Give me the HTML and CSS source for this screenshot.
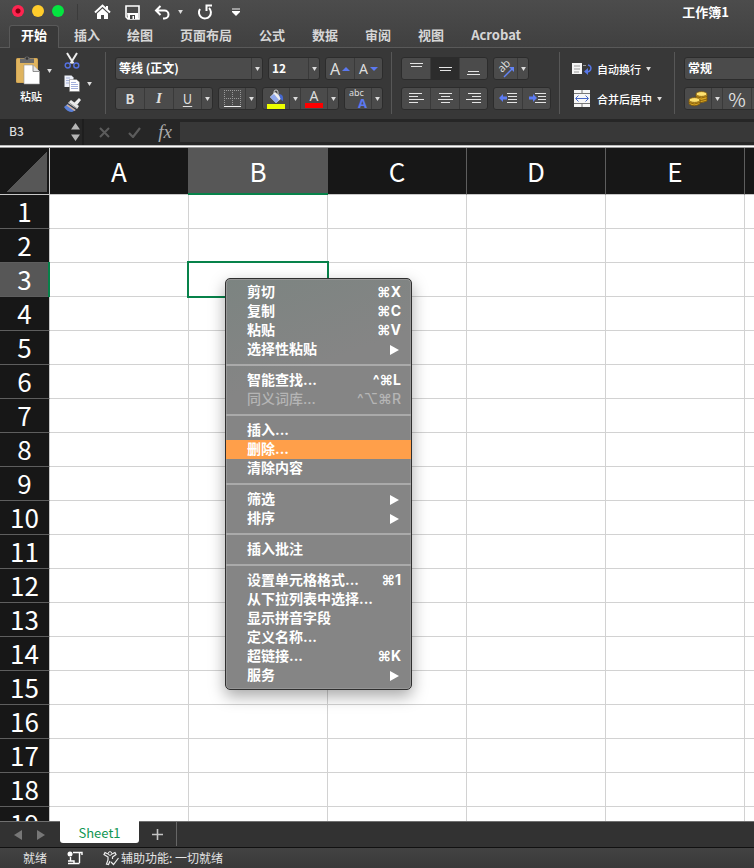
FILE: index.html
```html
<!DOCTYPE html>
<html lang="zh-CN">
<head>
    <meta charset="UTF-8">
    <meta name="viewport" content="width=device-width, initial-scale=1.0">
    <title>工作簿1</title>
    <link rel="stylesheet" href="styles.css">
</head>
<body>
    <svg width="0" height="0" class="defs">
        <symbol id="down" viewBox="0 0 6 5"><path d="M0 0h6L3 5z" fill="#dedede"/></symbol>
    </svg>

    <!-- Title bar -->
    <header class="titlebar">
        <div class="lights">
            <button class="light close" aria-label="关闭"></button>
            <button class="light minimize" aria-label="最小化"></button>
            <button class="light zoom" aria-label="缩放"></button>
        </div>
        <div class="quick">
            <button aria-label="主页"><svg width="17" height="16" viewBox="0 0 17 16"><path d="M1 8.500L8.500 1.500L16 8.500M13 2v3" fill="none" stroke="#fff" stroke-width="2"/><path d="M3 9.500l5.500-5 5.500 5V15h-4v-4H7v4H3z" fill="#fff"/></svg></button>
            <button aria-label="保存"><svg width="15" height="15" viewBox="0 0 15 15"><path d="M1 1h13v13H3l-2-2z" fill="none" stroke="#fff" stroke-width="1.600"/><path d="M2 8h11v6H3z" fill="#fff"/><path d="M5 10h5v4H5z" fill="#444"/><path d="M7.500 11h1.500v3H7.500z" fill="#fff"/></svg></button>
            <button aria-label="撤销"><svg width="17" height="15" viewBox="0 0 17 15"><path d="M6.500 1L2 5.500 6.500 10M2 5.500h8.500a4 4 0 0 1 0 8H9" fill="none" stroke="#fff" stroke-width="2"/></svg></button>
            <button class="more" aria-label="撤销选项"><svg width="5" height="4"><use href="#down"/></svg></button>
            <button aria-label="恢复"><svg width="17" height="16" viewBox="0 0 17 16"><path d="M3 5a6 6 0 1 0 9-1" fill="none" stroke="#fff" stroke-width="2"/><path d="M9.500 7V1.500H15" fill="none" stroke="#fff" stroke-width="2"/></svg></button>
            <button class="custom" aria-label="自定义"><svg width="8" height="8" viewBox="0 0 8 8"><path d="M0 1h8" stroke="#bbb" stroke-width="1.500"/><path d="M0 3h8v1L4 8 0 4z" fill="#fff"/></svg></button>
        </div>
        <h1>工作簿1</h1>
    </header>

    <nav class="tabs">
        <button class="active">开始</button>
        <button>插入</button>
        <button>绘图</button>
        <button>页面布局</button>
        <button>公式</button>
        <button>数据</button>
        <button>审阅</button>
        <button>视图</button>
        <button>Acrobat</button>
    </nav>

    <!-- Ribbon -->
    <section class="ribbon">
        <div class="group clipboard">
            <button class="paste">
                <svg width="25" height="31" viewBox="0 0 25 31"><rect y="3" width="22" height="25" rx="1.500" fill="#d3a653"/><rect x="1" y="4" width="20" height="23" fill="#dfb45f"/><path d="M4 3.500h4a3.200 3.200 0 0 1 6 0h4V8H4z" fill="#6c6c6c"/><circle cx="11" cy="3.500" r="1.300" fill="#333"/><path d="M8 10h9l6.500 6.500V29H8z" fill="#fff" stroke="#999" stroke-width=".6"/><path d="M17 10v6.500h6.500" fill="#e4e4e4" stroke="#777" stroke-width=".8"/></svg>
                <span>粘贴</span>
            </button>
            <button class="drop" aria-label="粘贴选项"><svg width="5" height="4"><use href="#down"/></svg></button>
            <div class="clips">
                <button aria-label="剪切"><svg width="16" height="17" viewBox="0 0 16 17"><path d="M3 1l6.500 10.500M13 1L6.500 11.500" stroke="#eee" stroke-width="2"/><circle cx="3.700" cy="13.500" r="2.500" fill="none" stroke="#5470e0" stroke-width="1.400"/><circle cx="12.300" cy="13.500" r="2.500" fill="none" stroke="#5470e0" stroke-width="1.400"/></svg></button>
                <div class="row">
                    <button aria-label="复制"><svg width="16" height="17" viewBox="0 0 16 17"><path d="M.5.5h7l2 2V12h-9z" fill="#eef1fa"/><path d="M2 3h4M2 5.500h5M2 8h3" stroke="#a3b0dc"/><path d="M5.500 4.500h7L15.500 7v9.500h-10z" fill="#fff" stroke="#777" stroke-width=".5"/><path d="M7 7.500h5M7 9.500h7M7 11.500h7M7 13.500h7" stroke="#a3b0dc"/></svg></button>
                    <button class="copy-more" aria-label="复制选项"><svg width="5" height="4"><use href="#down"/></svg></button>
                </div>
                <button aria-label="格式刷"><svg width="17" height="15" viewBox="0 0 17 15"><path d="M15 0l2 2-4 5-3-2z" fill="#eee"/><path d="M7 2l8 6-2 3-9-6z" fill="#e9e9e9"/><path d="M5 4.500l8 6" stroke="#999"/><path d="M3.500 6L12 12l-4 2Q3 14 0 9z" fill="#5b80d8"/><path d="M3 7L11 12.500" stroke="#e0b58c" stroke-width="1.500"/></svg></button>
            </div>
        </div>

        <div class="group">
            <div class="row">
                <div class="box combo font-name"><select aria-label="字体"><option>等线 (正文)</option></select><span class="arrow"><svg width="5" height="4"><use href="#down"/></svg></span></div>
                <div class="box combo font-size"><select aria-label="字号"><option>12</option></select><span class="arrow"><svg width="5" height="4"><use href="#down"/></svg></span></div>
                <div class="box">
                    <button class="grow" aria-label="增大字号">A<svg width="8" height="4" viewBox="0 0 8 4"><path d="M0 4l4-4 4 4z" fill="#5b78f0"/></svg></button>
                    <button class="shrink" aria-label="减小字号">A<svg width="8" height="4" viewBox="0 0 8 4"><path d="M0 0h8L4 4z" fill="#5b78f0"/></svg></button>
                </div>
            </div>
            <div class="row">
                <div class="box">
                    <button class="bold">B</button>
                    <button class="italic">I</button>
                    <button class="underline">U</button>
                    <button class="arrow" aria-label="下划线选项"><svg width="5" height="4"><use href="#down"/></svg></button>
                </div>
                <div class="box">
                    <button class="mid" aria-label="边框"><svg width="17" height="17" viewBox="0 0 17 17"><path d="M.5 0v16M8.500 0v16M16.500 0v16M0 .5h17M0 8.500h17" stroke="#999" stroke-dasharray="1 1"/><path d="M0 16.500h17" stroke="#eee"/></svg></button>
                    <button class="arrow" aria-label="边框选项"><svg width="5" height="4"><use href="#down"/></svg></button>
                </div>
                <div class="box">
                    <button class="mid" aria-label="填充颜色"><svg width="20" height="20" viewBox="0 0 20 20"><path d="M8 5V3a2 2 0 0 1 4 0v3" fill="none" stroke="#ccc"/><path d="M9 3l7 6-6 5-6-6z" fill="#eee"/><path d="M8 5l5 6-3 3-6-6z" fill="#91a9ed"/><path d="M13 5q5 0 4 7-3-1-4-7z" fill="#4668cf"/><rect y="15" x="1" width="18" height="5" fill="#edff00"/></svg></button>
                    <button class="arrow" aria-label="填充选项"><svg width="5" height="4"><use href="#down"/></svg></button>
                    <button class="font-color" aria-label="字体颜色">A</button>
                    <button class="arrow" aria-label="字体颜色选项"><svg width="5" height="4"><use href="#down"/></svg></button>
                </div>
                <div class="box">
                    <button class="mid phonetic"><span>abc</span><b>A</b></button>
                    <button class="arrow" aria-label="拼音选项"><svg width="5" height="4"><use href="#down"/></svg></button>
                </div>
            </div>
        </div>

        <div class="group">
            <div class="row">
                <div class="box">
                    <button aria-label="顶端对齐"><svg width="13" height="17" viewBox="0 0 13 17"><path d="M0 3.500h13M1 6.500h11" stroke="#e4e4e4"/></svg></button>
                    <button class="pressed" aria-label="垂直居中"><svg width="13" height="17" viewBox="0 0 13 17"><path d="M0 7.500h13M1 10.500h11" stroke="#e4e4e4"/></svg></button>
                    <button aria-label="底端对齐"><svg width="13" height="17" viewBox="0 0 13 17"><path d="M1 11.500h11M0 14.500h13" stroke="#e4e4e4"/></svg></button>
                </div>
                <div class="box">
                    <button class="angle" aria-label="方向"><svg width="20" height="18" viewBox="0 0 20 18"><text transform="translate(6 13) rotate(-45)" class="angle-text">ab</text><path d="M8 17l8-8" stroke="#6383f5" stroke-width="1.500"/><path d="M13 7h5v5z" fill="#6383f5"/></svg></button>
                    <button class="arrow" aria-label="方向选项"><svg width="5" height="4"><use href="#down"/></svg></button>
                </div>
            </div>
            <div class="row">
                <div class="box">
                    <button aria-label="左对齐"><svg width="15" height="11" viewBox="0 0 15 11"><path d="M0 .5h13M0 3.500h9M0 6.500h15M0 9.500h9" stroke="#e4e4e4"/></svg></button>
                    <button aria-label="居中"><svg width="15" height="11" viewBox="0 0 15 11"><path d="M1 .5h13M3 3.500h9M0 6.500h15M3 9.500h9" stroke="#e4e4e4"/></svg></button>
                    <button aria-label="右对齐"><svg width="15" height="11" viewBox="0 0 15 11"><path d="M2 .5h13M6 3.500h9M0 6.500h15M6 9.500h9" stroke="#e4e4e4"/></svg></button>
                </div>
                <div class="box">
                    <button aria-label="减少缩进"><svg width="18" height="11" viewBox="0 0 18 11"><path d="M8 .5h10M9 3.500h9M9 6.500h9M8 9.500h10" stroke="#e4e4e4"/><path d="M0 5l4-4v2.500h4v3H4V9z" fill="#5d7cf3"/></svg></button>
                    <button aria-label="增加缩进"><svg width="18" height="11" viewBox="0 0 18 11"><path d="M7 .5h11M10 3.500h8M10 6.500h8M7 9.500h11" stroke="#e4e4e4"/><path d="M9 5L5 1v2.500H1v3h4V9z" fill="#5d7cf3"/></svg></button>
                </div>
            </div>
        </div>

        <div class="group wrap">
            <button class="command">
                <svg width="20" height="13" viewBox="0 0 20 13"><path d="M0 1h10v11H0z" fill="#f5f5f5"/><path d="M2 4h6M2 7h6M2 10h5M11 3.500h3" stroke="#999"/><path d="M16 3q4 1 2.500 5Q17 10 15 10" fill="none" stroke="#5777e8" stroke-width="1.500"/><path d="M12 9.500L16 6v7z" fill="#5777e8"/></svg>
                <span>自动换行</span>
                <svg width="5" height="4"><use href="#down"/></svg>
            </button>
            <button class="command">
                <svg width="20" height="17" viewBox="0 0 20 17"><path d="M2 0h16v17H2z" fill="#f7f7f7"/><path d="M2 3.500h16M2 13.500h16M10 0v3M10 14v3" stroke="#777"/><path d="M4 8.500h12M6.500 5.500l-3 3 3 3M13.500 5.500l3 3-3 3" fill="none" stroke="#4868c8"/></svg>
                <span>合并后居中</span>
                <svg width="5" height="4"><use href="#down"/></svg>
            </button>
        </div>

        <div class="group number">
            <div class="row">
                <div class="box combo format"><select aria-label="数字格式"><option>常规</option></select><span class="arrow"><svg width="5" height="4"><use href="#down"/></svg></span></div>
            </div>
            <div class="row">
                <div class="box">
                    <button class="mid" aria-label="货币"><svg width="20" height="16" viewBox="0 0 20 16"><g fill="#d9a520" stroke="#79540a" stroke-width=".8"><path d="M8 3v7q5 3 11 0V3z"/><ellipse cx="13.500" cy="3" rx="5.500" ry="2.400" fill="#ffe270"/><path d="M8 5.500q5 3 11 0M8 8q5 3 11 0" fill="none"/><path d="M1 9v4q5 3.500 11 0V9z"/><ellipse cx="6.500" cy="9" rx="5.500" ry="2.400" fill="#ffe270"/><path d="M1 11.500q5 3 11 0" fill="none"/></g></svg></button>
                    <button class="arrow" aria-label="货币选项"><svg width="5" height="4"><use href="#down"/></svg></button>
                    <button class="percent">%</button>
                    <button aria-label="千位分隔"></button>
                </div>
            </div>
        </div>
    </section>

    <!-- Formula bar -->
    <section class="formula-bar">
        <div class="name-box">
            <input type="text" value="B3" aria-label="名称框">
            <svg width="9" height="18" viewBox="0 0 9 18"><path d="M0 6.500L4.500 0 9 6.500zM0 11.500h9L4.500 18z" fill="#b5b5b5"/></svg>
        </div>
        <button class="cancel" aria-label="取消"><svg width="11" height="11" viewBox="0 0 11 11"><path d="M1 1l9 9M10 1l-9 9" stroke="#5c5c5c" stroke-width="2"/></svg></button>
        <button class="enter" aria-label="输入"><svg width="13" height="11" viewBox="0 0 13 11"><path d="M1 6l4 4 7-9" fill="none" stroke="#5c5c5c" stroke-width="2.200"/></svg></button>
        <button class="fx">fx</button>
        <input class="formula" type="text" aria-label="编辑栏">
    </section>

    <main class="sheet">
        <table>
            <thead>
                <tr id="columns"><th class="corner"></th></tr>
            </thead>
            <tbody id="rows"></tbody>
        </table>
    </main>

    <footer>
        <div class="sheet-bar">
            <button class="step" aria-label="上一个"><svg width="8" height="10" viewBox="0 0 8 10"><path d="M8 0v10L0 5z" fill="#777"/></svg></button>
            <button class="step" aria-label="下一个"><svg width="8" height="10" viewBox="0 0 8 10"><path d="M0 0v10l8-5z" fill="#777"/></svg></button>
            <button class="sheet-tab">Sheet1</button>
            <button class="add" aria-label="新建工作表"><svg width="11" height="11" viewBox="0 0 11 11"><path d="M5.500 0v11M0 5.500h11" stroke="#c4c4c4" stroke-width="1.600"/></svg></button>
        </div>
        <div class="status">
            <span>就绪</span>
            <svg width="16" height="14" viewBox="0 0 16 14"><circle cx="3" cy="3" r="2.500" fill="#fff"/><path d="M6 1.500h9v2.500M12.500 2v10M3.500 6v4M1 12.500h11.500M1 10h6v2" fill="none" stroke="#fff" stroke-width="1.400"/></svg>
            <span class="access"><svg width="16" height="15" viewBox="0 0 16 15"><circle cx="7" cy="2.500" r="1.800" fill="none" stroke="#eee"/><path d="M5 3L2 1.500 1 3.500 5 6v3l-1.500 4 2 .5L7 10M9 3l3-1.500 1 2L9.500 6v2M8 11l2.500 2.500L15.500 7" fill="none" stroke="#eee" stroke-width="1.200"/></svg>辅助功能: 一切就绪</span>
        </div>
    </footer>

    <!-- Context menu -->
    <div class="menu">
        <button>剪切<kbd>⌘X</kbd></button>
        <button>复制<kbd>⌘C</kbd></button>
        <button>粘贴<kbd>⌘V</kbd></button>
        <button class="sub">选择性粘贴</button>
        <hr>
        <button>智能查找...<kbd>^⌘L</kbd></button>
        <button disabled>同义词库...<kbd>^⌥⌘R</kbd></button>
        <hr>
        <button>插入...</button>
        <button class="hover">删除...</button>
        <button>清除内容</button>
        <hr>
        <button class="sub">筛选</button>
        <button class="sub">排序</button>
        <hr>
        <button>插入批注</button>
        <hr>
        <button>设置单元格格式...<kbd>⌘1</kbd></button>
        <button>从下拉列表中选择...</button>
        <button>显示拼音字段</button>
        <button>定义名称...</button>
        <button>超链接...<kbd>⌘K</kbd></button>
        <button class="sub">服务</button>
    </div>

    <script>
        const columns = ['A', 'B', 'C', 'D', 'E', ''];
        const selected = { column: 'B', row: 3 };

        columns.forEach(name => {
            const th = document.createElement('th');
            th.textContent = name;
            if (name === selected.column) th.className = 'current';
            document.getElementById('columns').appendChild(th);
        });

        for (let i = 1; i <= 19; i++) {
            const tr = document.createElement('tr');
            const th = document.createElement('th');
            th.textContent = i;
            if (i === selected.row) th.className = 'current';
            tr.appendChild(th);
            columns.forEach(name => {
                const td = document.createElement('td');
                if (i === selected.row && name === selected.column) td.className = 'selected';
                tr.appendChild(td);
            });
            document.getElementById('rows').appendChild(tr);
        }
    </script>
</body>
</html>
```

FILE: styles.css
```css
* {
    box-sizing: border-box;
}
body {
    margin: 0;
    height: 100vh;
    display: flex;
    flex-direction: column;
    overflow: hidden;
    position: relative;
    background: #383838;
    color: #fff;
    font-family: "Noto Sans CJK SC", sans-serif;
    font-size: 12px;
}
.defs {
    position: absolute;
}
button, input, select {
    margin: 0;
    padding: 0;
    border: 0;
    outline: none;
    background: none;
    color: inherit;
    font: inherit;
}
button {
    display: flex;
    align-items: center;
    justify-content: center;
}
svg {
    display: block;
    flex: none;
}

/* title bar */
.titlebar {
    flex: none;
    height: 24px;
    display: flex;
    align-items: center;
    padding: 0 25px 0 12px;
    background: linear-gradient(#4c4c4c, #464646);
}
.lights {
    display: flex;
    gap: 8px;
    height: 16px;
    padding-right: 13px;
    border-right: 1px solid #3b3b3b;
}
.light {
    width: 12px;
    height: 12px;
    margin-top: 1px;
    border-radius: 50%;
}
.close {
    background: radial-gradient(circle, #7e0010 2px, #ff2450 3px);
}
.minimize {
    background: #ffcc2b;
}
.zoom {
    background: #04e440;
}
.quick {
    display: flex;
    align-items: center;
    padding-left: 16px;
}
.quick button {
    margin-right: 14px;
}
.quick .more {
    margin: 0 14px 0 -7px;
}
.quick .custom {
    margin-left: 4px;
}
h1 {
    margin: 0 0 0 auto;
    font-size: 13px;
    line-height: 24px;
}

/* tabs */
.tabs {
    flex: none;
    height: 24px;
    display: flex;
    gap: 3px;
    padding: 1px 9px 0;
    background: linear-gradient(#464646, #404040);
    border-bottom: 1px solid #595959;
}
.tabs button {
    height: 23px;
    padding: 0 12px 4px;
    border-radius: 3px 3px 0 0;
    color: #d6d6d6;
    font-size: 13px;
    font-weight: bold;
    white-space: nowrap;
}
.tabs .active {
    padding: 0 11px 5px;
    border: 1px solid #595959;
    border-bottom: 0;
    background: #393939;
    color: #fff;
}

/* ribbon */
.ribbon {
    flex: none;
    height: 71px;
    display: flex;
    padding: 4px 0 5px;
    overflow: hidden;
    background: #383838;
}
.group {
    flex: none;
    display: flex;
    flex-direction: column;
    gap: 7px;
    padding: 5px 8px 0 9px;
    border-right: 1px solid #575757;
}
.row {
    display: flex;
    gap: 5px;
}
.box {
    display: flex;
    height: 23px;
    border: 1px solid #2c2c2c;
    border-radius: 3px;
    background: #4b4b4b;
}
.box button {
    width: 29px;
    color: #dedede;
}
.box button:first-child, .box button:last-child, .box .underline {
    width: 28px;
}
.box button + button {
    border-left: 1px solid #3a3a3a;
}
.box .mid:first-child {
    width: 26px;
}
.box .arrow, .box .arrow:last-child {
    width: 11px;
}
.combo select {
    flex: 1;
    min-width: 0;
    padding: 0 0 3px 3px;
    appearance: none;
    font-size: 12px;
    font-weight: bold;
}
.combo .arrow {
    width: 14px;
    display: flex;
    align-items: center;
    justify-content: center;
    border-left: 1px solid #3a3a3a;
}
.font-name {
    width: 148px;
}
.font-size {
    width: 52px;
}
.format {
    width: 120px;
}
.pressed {
    background: #2c2c2c;
}
.grow, .shrink {
    gap: 2px;
    font-family: "Noto Sans", sans-serif;
    font-size: 16px;
    line-height: 20px;
}
.shrink {
    font-size: 14px;
}
.bold {
    font-weight: bold;
    font-size: 13px;
}
.italic {
    font: italic bold 15px "Liberation Serif", serif;
}
.underline {
    font-size: 13px;
    text-decoration: underline;
    text-underline-offset: 2px;
}
.box .font-color {
    width: 27px;
    align-items: flex-start;
    font: 14px/16px "Noto Sans", sans-serif;
    background: linear-gradient(#f00, #f00) 4px 15px / 18px 5px no-repeat;
}
.phonetic {
    flex-direction: column;
    align-items: flex-start;
    font: 9px/9px "Noto Sans", sans-serif;
}
.phonetic span {
    padding-left: 4px;
}
.phonetic b {
    padding-left: 13px;
    color: #5b78f0;
    font-size: 13px;
    line-height: 12px;
}
.box .angle:first-child {
    width: 23px;
}
.angle svg {
    overflow: visible;
}
.angle-text {
    fill: #ddd;
    font: 11px "Noto Sans", sans-serif;
}
.box .percent {
    font-size: 19px;
    line-height: 20px;
}
.wrap {
    width: 115px;
}
.command {
    height: 23px;
    gap: 5px;
    padding-left: 3px;
    justify-content: flex-start;
    font-size: 11px;
    font-weight: 500;
    white-space: nowrap;
}
.clipboard {
    width: 106px;
    flex-direction: row;
    gap: 0;
    padding: 0 0 0 14px;
}
.paste {
    flex-direction: column;
    justify-content: flex-start;
    gap: 2px;
    padding-top: 3px;
    font-size: 11px;
    font-weight: 500;
    line-height: 16px;
}
.paste span {
    padding-left: 6px;
}
.clipboard .drop {
    width: 14px;
    height: 38px;
}
.clips {
    display: flex;
    flex-direction: column;
    align-items: flex-start;
    gap: 6px;
    padding-left: 8px;
}
.copy-more {
    padding-left: 2px;
}

/* formula bar */
.formula-bar {
    flex: none;
    display: flex;
    height: 29px;
    padding-bottom: 3px;
    background: linear-gradient(#bbb 0 1px, #fff 1px 2px, #999 2px) bottom / 100% 3px no-repeat #262626;
}
.name-box {
    width: 84px;
    display: flex;
    align-items: center;
    padding: 0 4px 0 9px;
    border-right: 2px solid #1e1e1e;
}
.name-box input {
    width: 62px;
    padding-bottom: 2px;
    font-size: 12px;
    font-weight: 500;
    line-height: 20px;
    color: #ddd;
}
.cancel {
    width: 40px;
}
.enter {
    width: 20px;
}
.formula-bar .fx {
    width: 36px;
    padding-left: 6px;
    font: italic 19px/20px "Liberation Serif", serif;
    color: #aaa;
}
.formula {
    flex: 1;
    min-width: 0;
    height: 20px;
    margin: 3px 0 0;
    background: #383838;
}

/* grid */
.sheet {
    flex: 1;
    min-height: 0;
    overflow: hidden;
    background: #fff;
}
table {
    width: 884px;
    table-layout: fixed;
    border-spacing: 0;
}
th, td {
    height: 34px;
    padding: 0;
    border-right: 1px solid #d2d2d2;
    border-bottom: 1px solid #d2d2d2;
}
th {
    position: relative;
    padding-bottom: 2px;
    background: #171717;
    border-right-color: #c8c8c8;
    border-bottom-color: #5e5e5e;
    font-size: 26px;
    font-weight: normal;
    line-height: 31px;
}
thead th {
    height: 47px;
    border-right-color: #5e5e5e;
    border-bottom-color: #c8c8c8;
}
thead .corner {
    width: 50px;
    border-right-color: #c8c8c8;
    background: linear-gradient(to bottom right, transparent 50%, #575757 50%) 7px 4px / 40px 40px no-repeat #171717;
}
th.current {
    background: #575757;
}
thead .current::after {
    content: "";
    position: absolute;
    left: -1px;
    right: -1px;
    bottom: -1px;
    height: 2px;
    background: #07824a;
}
thead .current {
    border-right-color: #575757;
    box-shadow: -1px 0 #575757;
}
tbody .current::after {
    content: "";
    position: absolute;
    top: -1px;
    right: -1px;
    bottom: -1px;
    width: 2px;
    background: #07824a;
}
.selected {
    position: relative;
}
.selected::after {
    content: "";
    position: absolute;
    inset: -2px;
    border: 2px solid #07824a;
}

/* bottom bars */
footer {
    flex: none;
}
.sheet-bar {
    display: flex;
    height: 27px;
    padding-left: 14px;
    background: #323232;
    border-top: 1px solid #707070;
    border-bottom: 1px solid #111;
}
.step {
    width: 8px;
    margin-right: 15px;
}
.sheet-tab {
    width: 79px;
    height: 22px;
    margin-top: -1px;
    border-radius: 0 0 3px 3px;
    background: #fff;
    color: #109653;
    font-size: 13px;
}
.add {
    width: 38px;
    height: 24px;
    border-right: 1px solid #666;
}
.status {
    display: flex;
    align-items: center;
    height: 20px;
    padding-left: 23px;
    gap: 20px;
    background: linear-gradient(#434343, #393939);
    color: #e4e4e4;
    font-size: 12px;
    line-height: 20px;
}
.access {
    display: flex;
    align-items: center;
    gap: 2px;
}

/* context menu */
.menu {
    position: absolute;
    left: 225px;
    top: 278px;
    width: 187px;
    padding: 4px 0;
    border: 1px solid #2f2f2f;
    border-radius: 5px;
    background: linear-gradient(160deg, #7c8481, #858585 25%);
    box-shadow: inset 0 0 0 1px #969696, 0 6px 16px rgba(0,0,0,0.35);
    font-family: Inter, "Noto Sans CJK SC", sans-serif;
    font-size: 14px;
    font-weight: bold;
}
.menu button {
    width: 100%;
    height: 19px;
    padding: 0 10px 2px 21px;
    justify-content: space-between;
    line-height: 17px;
    white-space: nowrap;
}
.menu button:disabled {
    color: #b5b5b5;
    font-weight: 500;
}
.menu .hover {
    background: #ff9f4a;
}
.menu kbd {
    font: inherit;
}
.menu hr {
    height: 2px;
    margin: 5px 0;
    border: 0;
    background: #aaa;
}
.menu .sub::after {
    content: "";
    margin: 2px 2px 0 0;
    border: solid transparent;
    border-width: 5px 0 5px 9px;
    border-left-color: #fff;
}
```
